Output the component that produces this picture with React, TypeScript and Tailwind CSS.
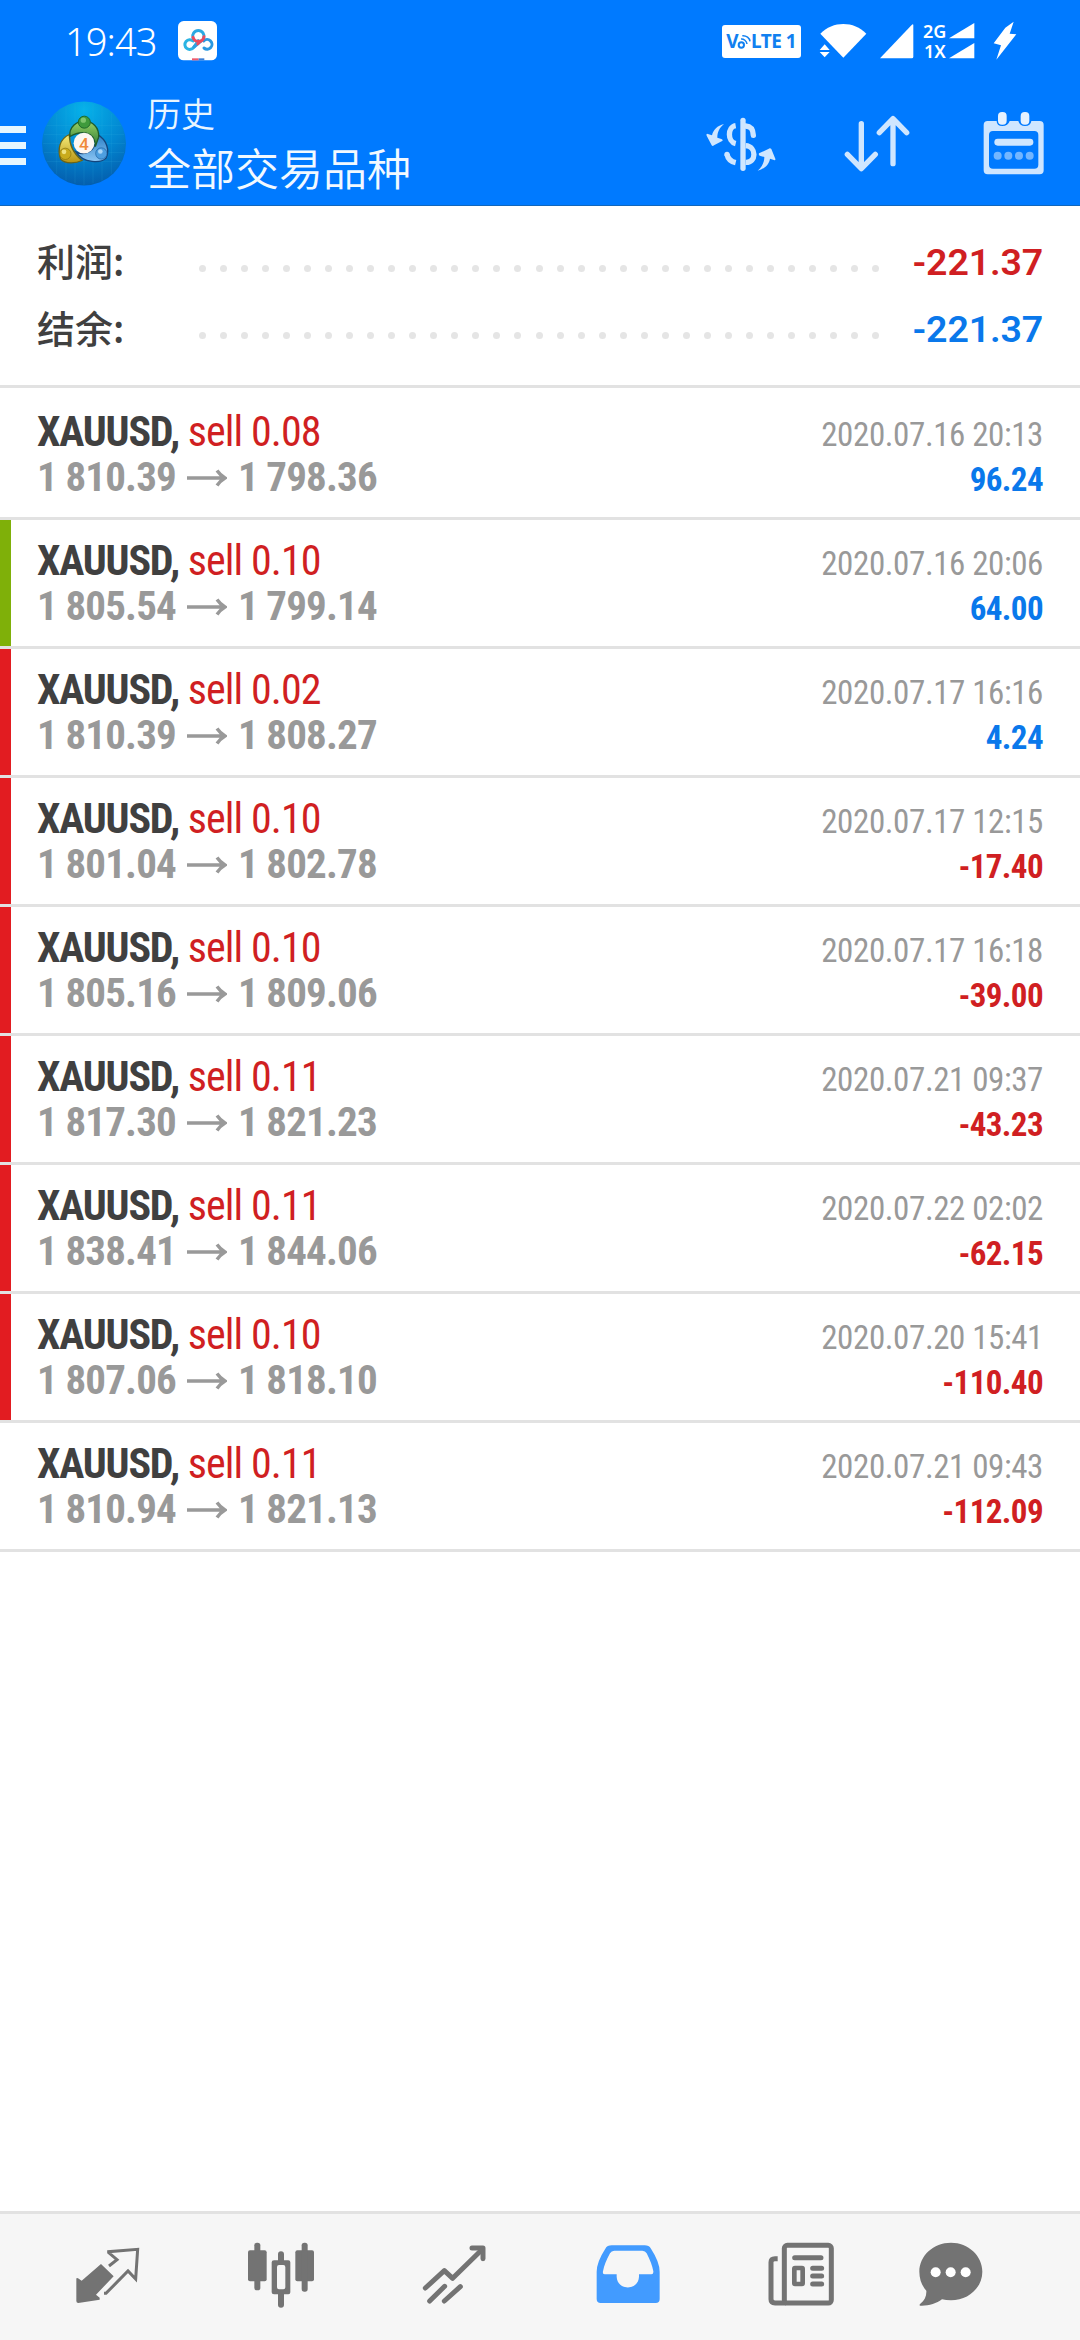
import type { ReactNode } from "react";

type Tone = "blue" | "red";
type Deal = {
  volume: string;
  open: string;
  close: string;
  time: string;
  profit: string;
  tone: Tone;
  mark?: "green" | "red";
};

const deals: Deal[] = [
  { volume: "0.08", open: "1 810.39", close: "1 798.36", time: "2020.07.16 20:13", profit: "96.24", tone: "blue" },
  { volume: "0.10", open: "1 805.54", close: "1 799.14", time: "2020.07.16 20:06", profit: "64.00", tone: "blue", mark: "green" },
  { volume: "0.02", open: "1 810.39", close: "1 808.27", time: "2020.07.17 16:16", profit: "4.24", tone: "blue", mark: "red" },
  { volume: "0.10", open: "1 801.04", close: "1 802.78", time: "2020.07.17 12:15", profit: "-17.40", tone: "red", mark: "red" },
  { volume: "0.10", open: "1 805.16", close: "1 809.06", time: "2020.07.17 16:18", profit: "-39.00", tone: "red", mark: "red" },
  { volume: "0.11", open: "1 817.30", close: "1 821.23", time: "2020.07.21 09:37", profit: "-43.23", tone: "red", mark: "red" },
  { volume: "0.11", open: "1 838.41", close: "1 844.06", time: "2020.07.22 02:02", profit: "-62.15", tone: "red", mark: "red" },
  { volume: "0.10", open: "1 807.06", close: "1 818.10", time: "2020.07.20 15:41", profit: "-110.40", tone: "red", mark: "red" },
  { volume: "0.11", open: "1 810.94", close: "1 821.13", time: "2020.07.21 09:43", profit: "-112.09", tone: "red" },
];

const toneClass: Record<Tone, string> = { blue: "text-[#0a78eb]", red: "text-[#d01f22]" };
const markClass = { green: "bg-[#7fb009]", red: "bg-[#e21c21]" };

/** Icons are drawn on a grid of three units per pixel. */
function Icon({ box, className, children }: { box: [number, number, number, number]; className?: string; children: ReactNode }) {
  return (
    <svg width={box[2] / 3} height={box[3] / 3} viewBox={box.join(" ")} className={className} fill="none">
      {children}
    </svg>
  );
}

function StatusBar() {
  return (
    <div className="flex h-[82px] items-center justify-between pl-[65px] pr-[63px] text-white">
      <div className="flex items-center">
        <span className="w-[113px] font-['Noto_Sans'] text-[38px] font-light leading-[40px] tracking-[-0.9px]">19:43</span>
        <Icon box={[534, 59, 118, 119]}>
          <rect x="534" y="59" width="117" height="118" rx="17" fill="#fff" />
          <path d="M576 177V171H596V177Z" fill="#ee5a6b" />
          <path d="M596 177V171H613V177Z" fill="#3a7fd6" />
          <g strokeWidth="9" strokeLinecap="round">
            <path d="M595 118L581 138A14.500 14.500 0 1 1 579 119" stroke="#2bb4e3" />
            <path d="M611 119A14.500 14.500 0 1 1 612 140" stroke="#2a98e0" />
            <path d="M582 137L603 119" stroke="#2f9fe0" />
            <path d="M579 110A17 17 0 1 1 611 110" stroke="#2ba9e2" />
            <path d="M579 108A17 17 0 0 0 612 106" stroke="#ec4c5e" />
            <path d="M601 120L593 128" stroke="#ec4c5e" strokeWidth="8" />
          </g>
        </Icon>
      </div>
      <div className="flex items-center">
        <div className="mt-[1px] flex h-[33px] w-[79px] items-center justify-center rounded-[3px] bg-white font-['Noto_Sans'] text-[19px] font-bold leading-none tracking-[-0.5px] text-[#1180f0]">
          <span>V</span>
          <Icon box={[176, 102, 42, 46]} className="-ml-[1px]">
            <g stroke="#1180f0">
              <circle cx="189" cy="135" r="8" strokeWidth="6" />
              <path d="M188 117C196 116 205 123 206 132" strokeWidth="4.500" />
              <path d="M192 107C204 106 214 114 215 124" strokeWidth="4.500" />
            </g>
          </Icon>
          <span>LTE 1</span>
        </div>
        <Icon box={[414, 68, 145, 108]} className="ml-[18px]">
          <path d="M487 172L418 100C455 61 519 61 556 100Z" fill="#fff" />
          <path d="M416 149L431 132L446 149Z M416 155L431 171L446 155Z" fill="#fff" />
        </Icon>
        <Icon box={[594, 68, 105, 105]} className="ml-[12px]">
          <path d="M597 171L692 71Q697 66 697 73V166Q697 171 692 171Z" fill="#fff" />
        </Icon>
        <div className="ml-[9px] flex w-[52px] flex-col font-['Noto_Sans'] text-[18px] font-semibold leading-[20px]">
          <div className="flex items-center justify-between">
            <span>2G</span>
            <Icon box={[806, 65, 77, 47]}>
              <path d="M806 111L882 65V111Z" fill="#fff" />
            </Icon>
          </div>
          <div className="flex items-center justify-between">
            <span className="pl-[1px]">1X</span>
            <Icon box={[806, 125, 77, 47]}>
              <path d="M806 171L882 125V171Z" fill="#fff" />
            </Icon>
          </div>
        </div>
        <Icon box={[938, 60, 72, 118]} className="ml-[18px]">
          <path d="M1000 62L975 80L940 127L962 133L948 176L1008 100L988 98Z" fill="#fff" />
        </Icon>
      </div>
    </div>
  );
}

function AppLogo() {
  return (
    <svg width="84" height="85" viewBox="36 32 252 254" className="ml-[16px]">
      <defs>
        <radialGradient id="disc" cx="0.5" cy="0.1" r="0.95">
          <stop offset="0" stopColor="#06b2ea" />
          <stop offset="0.55" stopColor="#0285d0" />
          <stop offset="1" stopColor="#0459a8" />
        </radialGradient>
        <linearGradient id="green" x1="0" y1="0" x2="0" y2="1">
          <stop offset="0" stopColor="#9bd264" />
          <stop offset="1" stopColor="#2b7a35" />
        </linearGradient>
        <linearGradient id="yellow" x1="0" y1="0" x2="0" y2="1">
          <stop offset="0" stopColor="#f5ee7c" />
          <stop offset="1" stopColor="#b89412" />
        </linearGradient>
        <linearGradient id="azure" x1="0" y1="0" x2="0" y2="1">
          <stop offset="0" stopColor="#2b7fc6" />
          <stop offset="1" stopColor="#8cc6f4" />
        </linearGradient>
      </defs>
      <circle cx="162" cy="159" r="126" fill="url(#disc)" />
      <path d="M80 70V250M108 50V270M135 40V278M162 34V284M189 40V278M216 50V270M244 70V250M50 105H274M42 132H282M38 159H286M42 186H282M50 213H274" stroke="#39b6e6" strokeOpacity="0.22" strokeWidth="2" />
      <path d="M204 133C230 148 240 180 228 203C214 218 160 220 138 184C160 196 196 190 204 133Z" fill="url(#azure)" stroke="#14457c" strokeWidth="4" />
      <path d="M118 132C88 146 82 176 92 206C106 222 140 218 156 210C136 194 118 170 118 132Z" fill="url(#yellow)" stroke="#6b6415" strokeWidth="4" />
      <path d="M120 138C116 110 140 92 162 92C188 92 208 110 206 140L196 168C196 120 150 120 120 138Z" fill="url(#green)" stroke="#1f5c2b" strokeWidth="4" />
      <circle cx="162" cy="158" r="31" fill="#fdf7f2" />
      <text x="162" y="177" textAnchor="middle" fontSize="52" fill="#f08a3a" className="font-['Roboto'] font-medium">4</text>
      <circle cx="163" cy="95" r="18" fill="#3f9a3c" stroke="#1f6a2b" strokeWidth="3" />
      <circle cx="160" cy="89" r="8" fill="#8fd07a" fillOpacity="0.8" />
      <circle cx="106" cy="190" r="17" fill="#c9ab1c" stroke="#85730f" strokeWidth="2" />
      <circle cx="102" cy="184" r="7" fill="#f3e88c" fillOpacity="0.9" />
      <circle cx="214" cy="189" r="17" fill="#4d9fe0" stroke="#1c5f9f" strokeWidth="2" />
      <circle cx="211" cy="183" r="7" fill="#b5ddfa" fillOpacity="0.9" />
    </svg>
  );
}

function AppBar() {
  return (
    <div className="flex h-[124px] items-center border-b border-[#1267bb] text-white">
      <div className="flex w-[26px] flex-col gap-[9px] pt-[3px]">
        <i className="block h-[7px] bg-[#e6f6ff]" />
        <i className="block h-[7px] bg-[#e6f6ff]" />
        <i className="block h-[7px] bg-[#e6f6ff]" />
      </div>
      <AppLogo />
      <div className="ml-[21px] flex grow flex-col pb-[4px] font-['Noto_Sans_CJK_SC','Noto_Sans',sans-serif] font-[350]">
        <span className="text-[34px] leading-[50px] text-[#e8f5ff]">历史</span>
        <span className="text-[44px] leading-[58px] text-[#f2f9ff]">全部交易品种</span>
      </div>
      <div className="flex items-center pr-[36px] text-[#cfe6ff]">
        <svg width="70" height="54" viewBox="16 42 210 162" fill="none">
          <rect x="119" y="44" width="16" height="160" rx="8" fill="currentColor" />
          <g stroke="currentColor" strokeWidth="16">
            <path d="M105 68C80 72 80 116 105 122" />
            <path d="M135 69C150 70 157 78 158 97" strokeLinecap="round" />
            <path d="M135 128C168 130 168 180 135 178" />
            <path d="M79 154C82 168 92 176 105 179" />
          </g>
          <circle cx="79" cy="154" r="8" fill="currentColor" />
          <path d="M70 63C50 68 38 80 34 97L19 92Q16 94 18 98L33 127Q36 131 40 127L66 113Q66 109 62 108L50 104C50 88 56 74 70 63Z" fill="currentColor" />
          <path d="M171 203C190 198 205 186 208 167L222 172Q226 170 223 165L212 138Q208 134 203 138L175 151Q173 156 177 158L191 162C191 178 184 192 171 203Z" fill="currentColor" />
        </svg>
        <Icon box={[489, 342, 198, 171]} className="ml-[68px]">
          <g stroke="currentColor" strokeWidth="16" strokeLinecap="round" strokeLinejoin="round">
            <path d="M541 368V500M499 460L541 503L583 460" />
            <path d="M636 488V355M595 395L636 353L677 395" />
          </g>
        </Icon>
        <Icon box={[904, 330, 184, 192]} className="mb-[2px] ml-[73px]">
          <path fillRule="evenodd" fill="currentColor" d="M918 360H945Q945 375 962 375Q979 375 984 360H1010Q1014 375 1030 375Q1047 375 1049 360H1074Q1086 360 1086 372V508Q1086 520 1074 520H918Q906 520 906 508V372Q906 360 918 360ZM934 390Q922 390 922 402V491Q922 503 934 503H1058Q1070 503 1070 491V402Q1070 390 1058 390Z" />
          <rect x="949" y="333" width="26" height="38" rx="12" fill="#e6f2ff" />
          <rect x="1017" y="333" width="26" height="38" rx="12" fill="#e6f2ff" />
          <rect x="938" y="413" width="117" height="21" rx="10" fill="currentColor" />
          <g fill="#73b6ff">
            <circle cx="948" cy="464" r="12" />
            <circle cx="980" cy="464" r="12" />
            <circle cx="1012" cy="464" r="12" />
            <circle cx="1044" cy="464" r="12" />
          </g>
        </Icon>
      </div>
    </div>
  );
}

function SummaryRow({ label, value, tone }: { label: string; value: string; tone: Tone }) {
  return (
    <div className="flex h-[67px] items-center justify-between">
      <span className="-mt-[9px] w-[162px] font-['Noto_Sans_CJK_SC',sans-serif] text-[38px] font-medium leading-[67px] text-[#404040]">{label}</span>
      <div className="mt-[9px] flex w-[680px] justify-between">
        {Array.from({ length: 33 }, (_, i) => (
          <i key={i} className="size-[7px] rounded-full bg-[#e5e5e5]" />
        ))}
      </div>
      <span className={`-mt-[3px] grow text-right font-['Roboto'] text-[37.5px] font-semibold leading-[67px] tracking-[-0.15px] ${toneClass[tone]}`}>{value}</span>
    </div>
  );
}

function DealRow({ deal }: { deal: Deal }) {
  return (
    <li className="flex h-[129px] border-b-[3px] border-[#e2e2e2]">
      <i className={`block w-[11px] ${deal.mark ? markClass[deal.mark] : ""}`} />
      <div className="flex grow flex-col pl-[26px] pr-[37px] pt-[18px] font-['Roboto_Condensed'] leading-[45px]">
        <div className="flex h-[46px] items-baseline justify-between">
          <span className="text-[42px] tracking-[-0.9px] text-[#d01f22]">
            <b className="font-bold tracking-[-1.2px] text-[#404040]">XAUUSD,</b> sell {deal.volume}
          </span>
          <span className="text-[33px] tracking-[-0.4px] text-[#999999]">{deal.time}</span>
        </div>
        <div className="flex h-[45px] items-baseline justify-between">
          <span className="flex items-baseline text-[41px] font-bold tracking-[-0.85px] text-[#999999]">
            {deal.open}
            <svg width="40" height="18" viewBox="0 0 40 18" fill="none" className="mx-[11px] self-center" stroke="currentColor" strokeWidth="3.4">
              <path d="M0 9H38M30 1.5Q33 6 38 9Q33 12 30 16.5" />
            </svg>
            {deal.close}
          </span>
          <span className={`text-[33px] font-bold tracking-[-0.6px] ${toneClass[deal.tone]}`}>{deal.profit}</span>
        </div>
      </div>
    </li>
  );
}

function BottomNav() {
  return (
    <nav className="flex h-[129px] items-center border-t-[3px] border-[#e2e2e2] bg-[#f6f6f6] pl-[21px] text-[#737373]">
      <div className="flex w-[173.5px] justify-center">
        <Icon box={[225, 122, 196, 218]}>
          <path d="M303 191L341 228L288 283L299 292V298L235 308Q229 308 229 302V236Q229 231 234 234L245 241Z" fill="currentColor" />
          <path d="M327 197L351 178L326 157V154L413 147L407 236L384 212L318 279L312 279" stroke="currentColor" strokeWidth="9" />
        </Icon>
      </div>
      <div className="flex w-[173.5px] justify-center">
        <Icon box={[738, 122, 204, 218]}>
          <g fill="currentColor">
            <rect x="741" y="150" width="56" height="93" rx="6" />
            <rect x="760" y="127" width="18" height="143" rx="8" />
            <rect x="883" y="150" width="56" height="93" rx="6" />
            <rect x="902" y="127" width="18" height="147" rx="8" />
            <path d="M831 162Q831 153 840 153Q849 153 849 162V180H862Q868 180 868 186V276Q868 282 862 282H849V313Q849 322 840 322Q831 322 831 313V282H819Q812 282 812 276V186Q812 180 819 180H831ZM834 194Q828 194 828 200V261Q828 267 834 267H847Q853 267 853 261V200Q853 194 847 194Z" fillRule="evenodd" />
          </g>
        </Icon>
      </div>
      <div className="flex w-[173.5px] justify-center">
        <Icon box={[183, 122, 196, 218]}>
          <g stroke="currentColor" strokeWidth="15" strokeLinecap="round" strokeLinejoin="round">
            <path d="M193 263L250 211L275 234L364 147" />
            <path d="M333 143H366V175" />
            <path d="M206 302L251 258M250 302L298 259" />
          </g>
        </Icon>
      </div>
      <div className="flex w-[173.5px] justify-center">
        <Icon box={[705, 122, 194, 218]} className="text-[#429bff]">
          <path fillRule="evenodd" fill="currentColor" d="M752 135H851Q864 135 870 145Q896 185 896 214V296Q896 308 884 308H719Q707 308 707 296V214Q707 185 733 145Q739 135 752 135ZM726 213Q724 222 732 222H767V229C769 272 832 272 834 229V222H871Q878 222 877 213Q873 190 857 159Q853 151 844 151H760Q751 151 747 159Q730 190 726 213Z" />
        </Icon>
      </div>
      <div className="flex w-[173.5px] justify-center">
        <Icon box={[145, 122, 200, 218]}>
          <g stroke="currentColor" strokeWidth="15">
            <rect x="194" y="135" width="141" height="173" rx="9" />
            <path d="M174 175H166Q154 175 154 186V297Q154 308 166 308H200" />
            <path d="M225 172H304M279 204H306M279 227H306M279 251H306" strokeLinecap="round" />
            <rect x="224" y="203" width="25" height="48" rx="2" strokeWidth="14" />
          </g>
        </Icon>
      </div>
      <div className="flex w-[125px] justify-center">
        <Icon box={[598, 122, 192, 218]}>
          <path d="M694 127C746 127 788 166 788 214C788 262 746 300 694 300C684 300 675 299 667 297C650 310 626 317 602 316Q597 315 602 310C615 301 621 288 620 271C607 257 599 237 599 214C599 166 641 127 694 127Z" fill="currentColor" />
          <g fill="#fff">
            <circle cx="648" cy="216" r="15" />
            <circle cx="693" cy="216" r="15" />
            <circle cx="738" cy="216" r="15" />
          </g>
        </Icon>
      </div>
    </nav>
  );
}

export default function App() {
  return (
    <div className="flex h-[2340px] w-[1080px] flex-col bg-white">
      <header className="bg-[#007aff]">
        <StatusBar />
        <AppBar />
      </header>
      <section className="h-[182px] border-b-[3px] border-[#e2e2e2] pl-[37px] pr-[37px] pt-[24px]">
        <SummaryRow label="利润:" value="-221.37" tone="red" />
        <SummaryRow label="结余:" value="-221.37" tone="blue" />
      </section>
      <ul className="grow pt-[3px]">
        {deals.map((deal) => (
          <DealRow key={deal.time} deal={deal} />
        ))}
      </ul>
      <BottomNav />
    </div>
  );
}
